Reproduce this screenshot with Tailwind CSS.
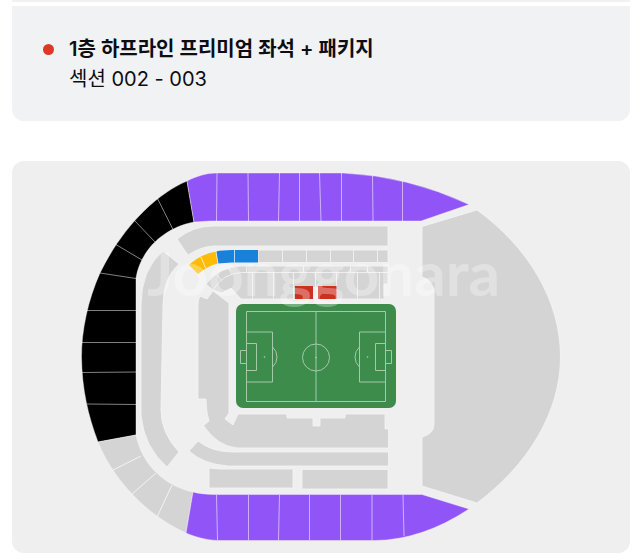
<!DOCTYPE html>
<html lang="ko">
<head>
    <meta charset="UTF-8">
    <meta name="viewport" content="width=device-width, initial-scale=1.0">
    <title>좌석 안내</title>
    <script src="https://cdn.jsdelivr.net/npm/@tailwindcss/browser@4"></script>
</head>
<body class="bg-white pl-3 pr-3.5 pb-2 font-['Inter','Noto_Sans_CJK_KR',sans-serif] text-[#0d0d12]">

    <div class="h-0.5 bg-[#f1f1f2]"></div>

    <!-- Ticket category -->
    <section class="mt-1 flex gap-[15px] rounded-b-xl bg-[#f1f2f4] pl-[31px] pr-8 pt-7 pb-[27px]">
        <span class="mt-2.5 size-[11px] shrink-0 rounded-full bg-[#dc3a28]"></span>
        <div class="text-xl leading-[30px]">
            <h2 class="font-semibold">1층 하프라인 프리미엄 좌석 + 패키지</h2>
            <p>섹션 002 - 003</p>
        </div>
    </section>

    <!-- Stadium map -->
    <section class="mt-10 overflow-hidden rounded-xl bg-[#efefef]">
        <svg class="block w-full" viewBox="12 161 618 392" role="img" aria-label="경기장 좌석 배치도">
            <!-- outer ring -->
            <g stroke="#fafafa" stroke-width=".4">
                <path fill="#000" d="M187 181C152 196 120 232 100 273C88 300 81.500 330 81.500 357C82 390 88 415 98 442L136 435V278C140 252 162 228 194 222Z"/>
                <path fill="#d4d4d4" d="M98 442C112 477 144 514 186 533L193 492C165 486 142 465 136 435Z"/>
                <path fill="#9155f7" d="M187 181C196 176.500 206 173 217 173H343Q408 176 469 204.500L421 221H210L194 222Z"/>
                <path fill="#9155f7" d="M193 492Q200 494 214 494.500H422L469 509Q422 540 375 540.500H217C206 540 195 537 186 533Z"/>
            </g>
            <g fill="none" stroke="#fff" stroke-width="1">
                <path stroke-opacity=".5" d="M157 197.500L173 229.500M134 220L155 242M115 244L142 260M100 273L136 278.500M87 310.500H136M82 342.500H136M82 372.500L136 372M87 404L136 404.500"/>
                <path stroke-opacity=".7" d="M113 470L141 456M132 494L156 473M157 517L172 485"/>
                <path stroke-opacity=".55" d="M217 173L216.500 221M248 173L248.500 221M279.500 173L278.500 221M299.500 173V221M319.500 173L321 221M341.500 173V221M372.500 175L373 221M402.500 181V221"/>
                <path stroke-opacity=".55" d="M216.500 495L217.500 540M248.500 495V540M279.500 495L278.500 540M309.500 495V540M340.500 495V540M372 495V540M403 495L404 536"/>
            </g>

            <!-- inner stands -->
            <g fill="#d4d4d4" stroke="#f5f5f5" stroke-width=".8">
                <path d="M422 226.500L477 210C528 247 560.500 300 560.500 357C560.500 412 528 465 477 503L422 486V437Q434 434 434 424V292Q433 280 422 277Z"/>
                <path d="M177 239Q193 226 213 226H388V246H213Q200 247 188 255Z"/>
                <path d="M163 251Q141 270 141 305V415Q144 447 167 467L179 452Q161 433 161 410L163 305Q163 278 179 264Z"/>
                <path d="M258 250H388V262.500H258Z"/>
                <path d="M206 284Q219 267 240 266H388V284H384V299H241L231 288L222 293L213 290Z"/>
                <path d="M198 305Q198 299 200 296L207 299L213 291L229 303V413L225 419L233 425L238 414H287V418H313V426H320V418H345V414H385V429H388.500V448H237Q217 446 203.500 425.500L209 421Q206 412 206 399H198Z"/>
                <path d="M189 451L198 441Q212 452 232 452H388.500V466H228Q203 464 189 451Z"/>
                <path d="M209 468L220 469H293V488H209ZM302 469.500H388V489H302Z"/>
            </g>
            <path fill="none" stroke="#efefef" stroke-width="1" d="M282.500 250V262M306.500 250V262M330.500 250V262M353.500 250V262M377.500 250V262M213 290Q223 273 242 272.500H388M246.500 266V272M303.500 266V272M350.500 266V272M367.500 266V272M252.500 273V299M273.500 273V299M293.500 273V299M315.500 273V299M336.500 273V299M357.500 273V299M379.500 273V299M217 275L222 281M229 268L232 275"/>

            <path fill="#ffbb05" d="M189 265Q201 254 216 251.500L218 263.500Q207 266 198 274Z"/>
            <path fill="#1881da" d="M216 251.500Q222 250 232 250H258V262.500H232Q224 263 218 263.500Z"/>
            <path fill="none" stroke="#fff" stroke-opacity=".7" d="M201 257L205.500 268M216 251L218 264M234.500 250V262.500"/>
            <path fill="#cd3021" d="M295 286H313V299H295ZM318 286H336.500V299H318Z"/>
            <path fill="#efefef" d="M313 287H318V299H313Z"/>

            <!-- pitch -->
            <rect x="236" y="304" width="160" height="104" rx="7" fill="#3d8c4c"/>
            <g fill="none" stroke="#a5c9ac" stroke-width="1">
                <path d="M246.500 311.500H385.500V401.500H246.500ZM316 311.500V401.500"/>
                <circle cx="316" cy="357.500" r="13.500"/>
                <path d="M246.500 332H272.500V382H246.500M246.500 343.500H256.500V370.500H246.500M246.500 350.500H240.500V363.500H246.500M272.500 347Q277 351 277 357T272.500 367"/>
                <path d="M385.500 332H359.500V382H385.500M385.500 343.500H375.500V370.500H385.500M385.500 350.500H391.500V363.500H385.500M359.500 347Q355 351 355 357T359.500 367"/>
            </g>
            <g fill="#b2d1b8">
                <circle cx="264.500" cy="357" r=".8"/>
                <circle cx="316" cy="357.500" r=".8"/>
                <circle cx="367.500" cy="357" r=".8"/>
            </g>

            <!-- watermark -->
            <text class="font-['Lato',sans-serif] font-bold" x="147" y="296" font-size="62" fill="#fff" fill-opacity=".3">Joonggonara</text>
        </svg>
    </section>

</body>
</html>
